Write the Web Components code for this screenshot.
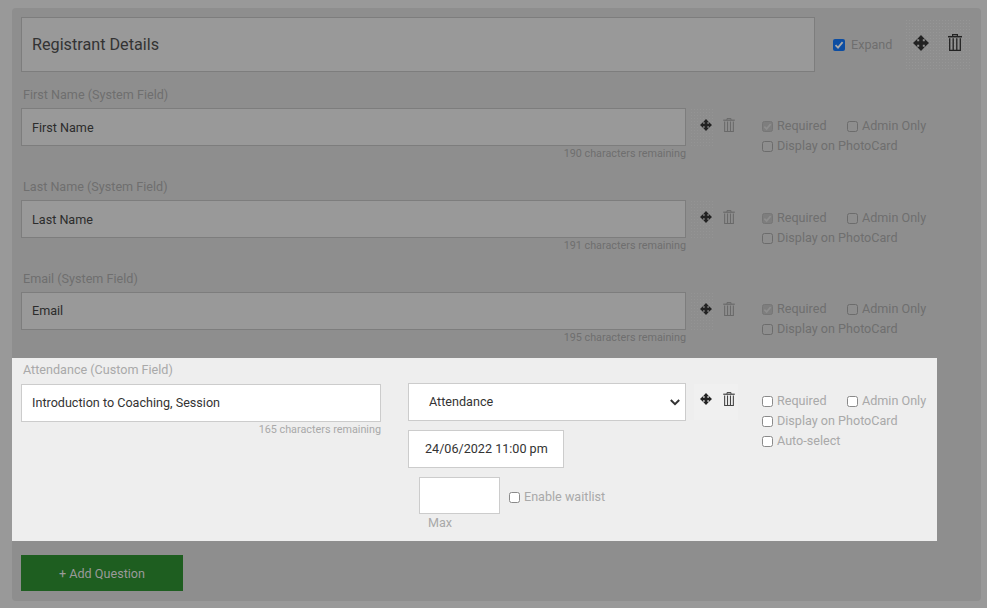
<!DOCTYPE html>
<html>
<head>
<meta charset="utf-8">
<style>
  html, body { margin: 0; height: 100%; background: #999; overflow: hidden; }
  body { font-family: Roboto, "Liberation Sans", sans-serif; font-size: 12.6px; }
</style>
</head>
<body>
<form-panel>
  <header-row title="Registrant Details"></header-row>
  <field-row label="First Name (System Field)" value="First Name" remaining="190"></field-row>
  <field-row label="Last Name (System Field)" value="Last Name" remaining="191"></field-row>
  <field-row tight label="Email (System Field)" value="Email" remaining="195"></field-row>
  <attendance-row></attendance-row>
  <add-button>+ Add Question</add-button>
</form-panel>

<script>
const moveSvg = `<svg viewBox="0 0 16 16" width="100%" height="100%" fill="currentColor" style="display:block"><path d="M8 0 12 4.2H9.8V6.2H11.8V4L16 8 11.8 12V9.8H9.8V11.8H12L8 16 4 11.8H6.2V9.8H4.2V12L0 8 4.2 4V6.2H6.2V4.2H4Z"/></svg>`;
const trashSvg = `<svg viewBox="0 0 14 17" width="100%" height="100%" fill="none" stroke="currentColor" style="display:block"><path d="M0 2.7H14" stroke-width="1.5"/><path d="M4.6 2.4V.7H9.4V2.4" stroke-width="1.2"/><path d="M1.7 4.2V16.3H12.3V4.2" stroke-width="1.3"/><path d="M5.2 4.2V16M8.8 4.2V16" stroke-width="1.3"/></svg>`;

class FormPanel extends HTMLElement {
  constructor() {
    super();
    this.attachShadow({ mode: "open" });
    this.shadowRoot.innerHTML = `
      <style>
        :host {
          display: block;
          margin: 8px 6px 0 12px;
          height: 593px;
          background: #8e8e8e;
          border-radius: 4px;
          box-sizing: border-box;
          padding-top: 9px;
        }
      </style>
      <slot></slot>`;
  }
}
customElements.define("form-panel", FormPanel);

class CheckBox extends HTMLElement {
  constructor() {
    super();
    this.attachShadow({ mode: "open" });
    this.shadowRoot.innerHTML = `
      <style>
        :host { display: inline-flex; align-items: center; gap: 4px; color: var(--check-text, #6f6f6f); font-size: 12.6px; line-height: 20px; white-space: nowrap; }
        .box {
          width: 11px; height: 11px; box-sizing: border-box; border-radius: 2.5px; flex: none;
          border: 1px solid var(--check-border, #6c6c6c);
          background: var(--check-bg, transparent);
          display: flex; align-items: center; justify-content: center;
        }
        svg { display: none; }
        :host([checked]) .box { background: #7e7e7e; border-color: #767676; }
        :host([checked]) svg { display: block; }
      </style>
      <span class="box"><svg width="9" height="9" viewBox="0 0 10 10"><path d="M1.5 5.2 4 7.6 8.6 2.2" fill="none" stroke="#8e8e8e" stroke-width="2"/></svg></span>
      <span><slot></slot></span>`;
  }
}
customElements.define("check-box", CheckBox);

class HeaderRow extends HTMLElement {
  constructor() {
    super();
    this.attachShadow({ mode: "open" });
    this.shadowRoot.innerHTML = `
      <style>
        :host { display: flex; align-items: flex-start; padding-left: 9px; }
        .title {
          width: 794px; height: 55px; box-sizing: border-box; flex: none;
          background: #999; border: 1px solid #7d7d7d;
          padding-left: 10px; line-height: 53px;
          font-size: 16.2px; color: #333;
        }
        .expand { display: flex; align-items: center; gap: 6px; width: 72px; margin: 18px 0 0 18px; color: #6f6f6f; font-size: 12.6px; line-height: 20px; }
        .box {
          width: 12px; height: 12px; background: #0c4da2; border-radius: 2px;
          display: flex; align-items: center; justify-content: center;
        }
        .tools {
          display: flex; gap: 19px; align-items: flex-start;
          box-sizing: border-box; width: 67px; height: 51px; margin-top: 2px; padding: 15px 0 0 8px;
          color: #222;
          background-image: radial-gradient(rgba(255,255,255,.07) .8px, transparent 1px);
          background-size: 3px 3px;
        }
        .move { width: 16px; height: 16px; margin-top: 1px; flex: none; }
        .trash { width: 14px; height: 17px; flex: none; }
      </style>
      <div class="title">${this.getAttribute("title")}</div>
      <div class="expand">
        <span class="box"><svg width="10" height="10" viewBox="0 0 10 10"><path d="M1.5 5.2 4 7.6 8.6 2.2" fill="none" stroke="#a9a9a9" stroke-width="1.8"/></svg></span>
        <span>Expand</span>
      </div>
      <div class="tools"><span class="move">${moveSvg}</span><span class="trash">${trashSvg}</span></div>`;
  }
}
customElements.define("header-row", HeaderRow);

const rowStyles = `
  .label { font-size: 12.6px; line-height: 16px; color: #6f6f6f; padding-left: 2px; }
  .input {
    box-sizing: border-box; height: 38px; line-height: 37px;
    background: #999; border: 1px solid #7d7d7d;
    padding-left: 10px; font-size: 12.6px; color: #2c2c2c;
  }
  .hint { font-size: 10.8px; line-height: 15px; color: #6f6f6f; text-align: right; }
  .tools {
    width: 76px; flex: none; display: flex; align-items: flex-start; position: relative;
    padding: 10px 0 0 14px; box-sizing: border-box; gap: 11px; color: #222;
  }
  .tools::before {
    content: ""; position: absolute; left: 4px; top: 0; width: 23px; height: 38px;
    background-image: radial-gradient(rgba(255,255,255,.05) .8px, transparent 1px);
    background-size: 3px 3px;
  }
  .move { width: 12px; height: 12px; margin-top: 1px; flex: none; position: relative; }
  .trash { width: 12px; height: 14px; flex: none; color: #6a6a6a; position: relative; }
  .checks { display: flex; flex-direction: column; padding-top: 8px; }
  .line { display: grid; grid-template-columns: 85px auto; height: 20px; }
`;

class FieldRow extends HTMLElement {
  constructor() {
    super();
    this.attachShadow({ mode: "open" });
    this.shadowRoot.innerHTML = `
      <style>
        ${rowStyles}
        :host { display: block; padding: 15px 0 0 9px; height: 77px; }
        .label { margin-bottom: 5px; }
        .body { display: flex; }
        .left { width: 665px; flex: none; }
        :host([tight]) .input { line-height: 35px; }
        :host([tight]) .checks { padding-top: 7px; }
      </style>
      <div class="label">${this.getAttribute("label")}</div>
      <div class="body">
        <div class="left">
          <div class="input">${this.getAttribute("value")}</div>
          <div class="hint">${this.getAttribute("remaining")} characters remaining</div>
        </div>
        <div class="tools"><span class="move">${moveSvg}</span><span class="trash">${trashSvg}</span></div>
        <div class="checks">
          <div class="line"><check-box checked>Required</check-box><check-box>Admin Only</check-box></div>
          <div class="line"><check-box>Display on PhotoCard</check-box></div>
        </div>
      </div>`;
  }
}
customElements.define("field-row", FieldRow);

class AttendanceRow extends HTMLElement {
  constructor() {
    super();
    this.attachShadow({ mode: "open" });
    this.shadowRoot.innerHTML = `
      <style>
        ${rowStyles}
        :host {
          display: block; width: 925px; height: 183px; box-sizing: border-box;
          background: #eee; padding: 4px 0 0 9px; margin-top: 10px;
          --check-text: #a9a9a9; --check-border: #8a8a8a; --check-bg: #fff;
        }
        .label { color: #a9a9a9; margin-bottom: 6px; }
        .body { display: flex; }
        .title { width: 360px; flex: none; }
        .input { background: #fff; border-color: #ccc; color: #333; line-height: 35px; }
        .hint { color: #a9a9a9; }
        .type { width: 278px; margin-left: 27px; flex: none; margin-top: -1px; }
        .select {
          box-sizing: border-box; height: 38px; background: #fff; border: 1px solid #ccc;
          padding: 0 5px 2px 20px; display: flex; align-items: center; justify-content: space-between;
          font-size: 12.6px; color: #333;
        }
        .select svg { margin-top: 2px; }
        .date { width: 156px; margin-top: 9px; padding-left: 16px; }
        .waitlist { display: flex; margin: 9px 0 0 11px; gap: 9px; align-items: flex-start; }
        .max { width: 81px; height: 37px; box-sizing: border-box; background: #fff; border: 1px solid #ccc; }
        .maxlabel { font-size: 12.6px; line-height: 16px; color: #a9a9a9; padding: 1px 0 0 9px; }
        .waitlist check-box { margin-top: 10px; }
        .tools { padding-top: 8px; }
        .tools::before { left: 8px; width: 44px; height: 36px; background-image: none; background-color: #f0f0f0; }
        .trash { color: #444; }
        .checks { padding-top: 7px; }
      </style>
      <div class="label">Attendance (Custom Field)</div>
      <div class="body">
        <div class="title">
          <div class="input">Introduction to Coaching, Session</div>
          <div class="hint">165 characters remaining</div>
        </div>
        <div class="type">
          <div class="select"><span>Attendance</span>
            <svg width="10" height="7" viewBox="0 0 10 7"><path d="M.8 1 5 5.2 9.2 1" fill="none" stroke="#333" stroke-width="2"/></svg>
          </div>
          <div class="input date">24/06/2022 11:00 pm</div>
          <div class="waitlist">
            <div><div class="max"></div><div class="maxlabel">Max</div></div>
            <check-box>Enable waitlist</check-box>
          </div>
        </div>
        <div class="tools"><span class="move">${moveSvg}</span><span class="trash">${trashSvg}</span></div>
        <div class="checks">
          <div class="line"><check-box>Required</check-box><check-box>Admin Only</check-box></div>
          <div class="line"><check-box>Display on PhotoCard</check-box></div>
          <div class="line"><check-box>Auto-select</check-box></div>
        </div>
      </div>`;
  }
}
customElements.define("attendance-row", AttendanceRow);

class AddButton extends HTMLElement {
  constructor() {
    super();
    this.attachShadow({ mode: "open" });
    this.shadowRoot.innerHTML = `
      <style>
        :host {
          display: flex; align-items: center; justify-content: center;
          width: 162px; height: 36px; margin: 14px 0 0 9px;
          background: #1e5e20; color: #9a9a9a; font-size: 12.6px;
        }
      </style>
      <slot></slot>`;
  }
}
customElements.define("add-button", AddButton);
</script>
</body>
</html>
